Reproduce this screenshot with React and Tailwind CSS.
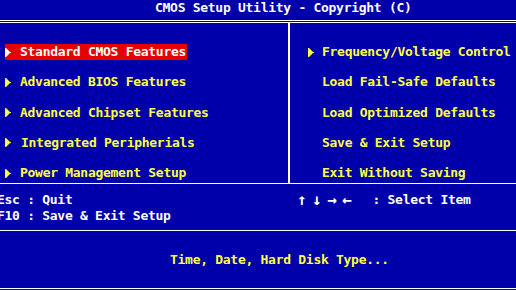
import React from "react";

const Arrow = ({ color }) => (
  <svg width="6" height="9" viewBox="0 0 6 9" className="shrink-0">
    <polygon points="0,0 1,0 5,4 6,4 6,5 5,5 1,9 0,9" fill={color} />
  </svg>
);

const left = [
  "Standard CMOS Features",
  "Advanced BIOS Features",
  "Advanced Chipset Features",
  "Integrated Peripherials",
  "Power Management Setup",
];

const right = [
  { t: "Frequency/Voltage Control", a: true },
  { t: "Load Fail-Safe Defaults" },
  { t: "Load Optimized Defaults" },
  { t: "Save & Exit Setup" },
  { t: "Exit Without Saving" },
];

const Key = ({ c }) => (
  <span className="inline-block w-[15.1px] text-[16px] leading-[16px] tracking-normal">{c}</span>
);

export default function App() {
  return (
    <div
      className="w-[516px] h-[290px] bg-[#0000aa] overflow-hidden font-bold text-[13px] leading-[16px] tracking-[-0.28px] whitespace-pre"
      style={{ fontFamily: '"DejaVu Sans Mono", "Liberation Mono", monospace' }}
    >
      <div className="h-[20px] pl-[155px] text-white">CMOS Setup Utility - Copyright (C)</div>
      <div className="h-[3px] border-t border-b border-white" />
      <div className="h-[160px] flex">
        <div className="w-[288px] pt-[21px] flex flex-col gap-[14.3px]">
          {left.map((t, i) =>
            i === 0 ? (
              <div key={t} className="h-[16px] flex">
                <div className="ml-[5px] h-[16px] pr-[1px] bg-[#e60000] flex items-center text-white">
                  <Arrow color="#ffffff" />
                  <span className="ml-[9px]">{t}</span>
                </div>
              </div>
            ) : (
              <div key={t} className="h-[16px] pl-[5px] flex items-center text-[#ffff44]">
                <Arrow color="#ffff44" />
                <span className={i === 3 ? "ml-[10px]" : "ml-[9px]"}>{t}</span>
              </div>
            )
          )}
        </div>
        <div className="w-[2px] bg-white" />
        <div className="flex-1 pt-[21px] flex flex-col gap-[14.3px] text-[#ffff44]">
          {right.map((r) => (
            <div key={r.t} className="h-[16px] pl-[18px] flex items-center">
              {r.a ? <Arrow color="#ffff44" /> : <span className="w-[6px]" />}
              <span className="ml-[8px]">{r.t}</span>
            </div>
          ))}
        </div>
      </div>
      <div className="h-[1px] bg-white" />
      <div className="h-[46px] flex text-white pt-[8px]">
        <div className="w-[298px] -ml-[3px] flex flex-col">
          <div>Esc : Quit</div>
          <div>F10 : Save &amp; Exit Setup</div>
        </div>
        <div className="pl-[2px] flex h-[16px]">
          <Key c="↑" />
          <Key c="↓" />
          <Key c="→" />
          <Key c="←" />
          <span>  : Select Item</span>
        </div>
      </div>
      <div className="h-[1px] bg-white" />
      <div className="h-[57px] pt-[21px] pl-[170px] text-[#ffff44]">Time, Date, Hard Disk Type...</div>
      <div className="h-[1px] bg-white" />
    </div>
  );
}
